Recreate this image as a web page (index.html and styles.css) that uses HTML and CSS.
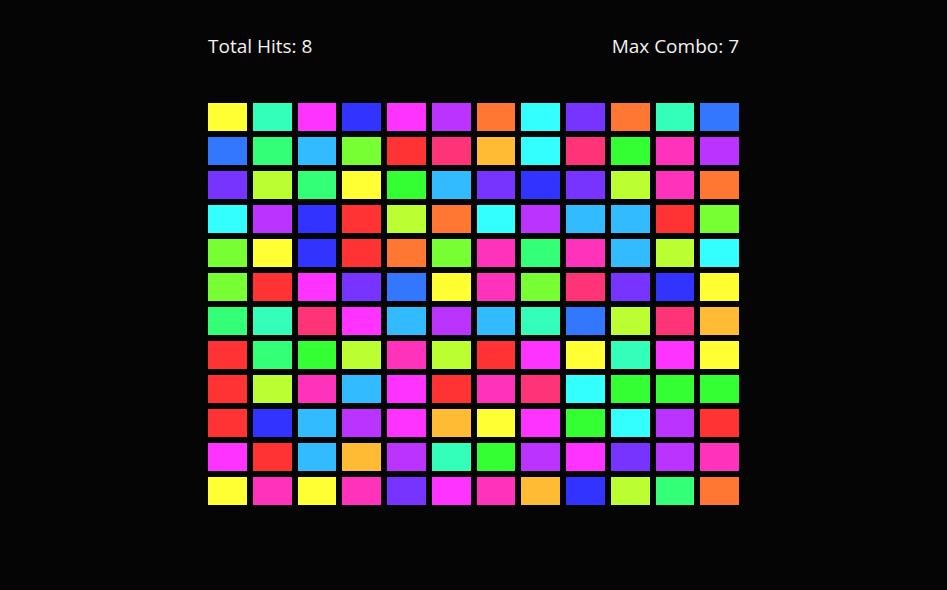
FILE: index.html
```html
<!DOCTYPE html>
<html lang="en">
<head>
    <meta charset="UTF-8">
    <meta name="viewport" content="width=device-width, initial-scale=1.0">
    <title>Color Hits</title>
    <link rel="stylesheet" href="styles.css">
</head>
<body>

    <div id="game">
        <div class="stats">
            <span>Total Hits: <span id="hits">8</span></span>
            <span>Max Combo: <span id="combo">7</span></span>
        </div>
        <div id="board"></div>
    </div>

    <script>
        // hue of every tile, row by row (hsl, 100% sat, 60% light)
        const hues = [
            [60, 160, 300, 240, 300, 280, 20, 180, 260, 20, 160, 220],
            [220, 140, 200, 100, 0, 340, 40, 180, 340, 120, 320, 280],
            [260, 80, 140, 60, 120, 200, 260, 240, 260, 80, 320, 20],
            [180, 280, 240, 0, 80, 20, 180, 280, 200, 200, 0, 100],
            [100, 60, 240, 0, 20, 100, 320, 140, 320, 200, 80, 180],
            [100, 0, 300, 260, 220, 60, 320, 100, 340, 260, 240, 60],
            [140, 160, 340, 300, 200, 280, 200, 160, 220, 80, 340, 40],
            [0, 140, 120, 80, 320, 80, 0, 300, 60, 160, 300, 60],
            [0, 80, 320, 200, 300, 0, 320, 340, 180, 120, 120, 120],
            [0, 240, 200, 280, 300, 40, 60, 300, 120, 180, 280, 0],
            [300, 0, 200, 40, 280, 160, 120, 280, 300, 260, 280, 320],
            [60, 320, 60, 320, 260, 300, 320, 40, 240, 80, 140, 20]
        ];

        let hits = 8;
        let combo = 0;
        let maxCombo = 7;
        let lastHue = null;

        const board = document.getElementById('board');

        hues.forEach(row => {
            row.forEach(h => {
                const tile = document.createElement('div');
                tile.className = 'tile';
                tile.style.background = 'hsl(' + h + ', 100%, 60%)';
                tile.onclick = () => hit(tile, h);
                board.appendChild(tile);
            });
        });

        function hit(tile, h) {
            hits++;
            combo = (h === lastHue) ? combo + 1 : 1;
            lastHue = h;
            if (combo > maxCombo) maxCombo = combo;
            tile.style.background = 'hsl(' + Math.floor(Math.random() * 18) * 20 + ', 100%, 60%)';
            document.getElementById('hits').innerText = hits;
            document.getElementById('combo').innerText = maxCombo;
        }
    </script>
</body>
</html>
```

FILE: styles.css
```css
body {
    margin: 0;
    background: #050505;
    color: #f2f2f2;
    font-family: "Open Sans", "Noto Sans", sans-serif;
}
#game {
    width: 531px;
    margin: 0 auto;
    padding-top: 30px;
}
.stats {
    display: flex;
    justify-content: space-between;
    font-size: 19px;
    line-height: 32px;
}
#board {
    display: grid;
    grid-template-columns: repeat(12, 1fr);
    grid-auto-rows: 28px;
    gap: 6px;
    margin-top: 41px;
}
.tile {
    cursor: pointer;
}
.tile:hover {
    filter: brightness(1.15);
}
```
